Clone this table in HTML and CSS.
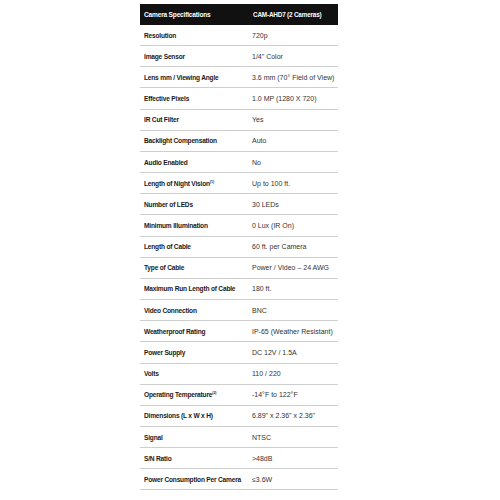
FILE: index.html
```html
<!DOCTYPE html>
<html>
<head>
<meta charset="utf-8">
<link rel="stylesheet" href="styles.css">
</head>
<body>
<div class="specs">
  <div class="row head"><div class="k">Camera Specifications</div><div class="v">CAM-AHD7 (2 Cameras)</div></div>
  <div class="row"><div class="k">Resolution</div><div class="v">720p</div></div>
  <div class="row"><div class="k">Image Sensor</div><div class="v">1/4" Color</div></div>
  <div class="row"><div class="k">Lens mm / Viewing Angle</div><div class="v">3.6 mm (70° Field of View)</div></div>
  <div class="row"><div class="k">Effective Pixels</div><div class="v">1.0 MP (1280 X 720)</div></div>
  <div class="row"><div class="k">IR Cut Filter</div><div class="v">Yes</div></div>
  <div class="row"><div class="k">Backlight Compensation</div><div class="v">Auto</div></div>
  <div class="row"><div class="k">Audio Enabled</div><div class="v">No</div></div>
  <div class="row"><div class="k">Length of Night Vision<sup class="note">(1)</sup></div><div class="v">Up to 100 ft.</div></div>
  <div class="row"><div class="k">Number of LEDs</div><div class="v">30 LEDs</div></div>
  <div class="row"><div class="k">Minimum Illumination</div><div class="v">0 Lux (IR On)</div></div>
  <div class="row"><div class="k">Length of Cable</div><div class="v">60 ft. per Camera</div></div>
  <div class="row"><div class="k">Type of Cable</div><div class="v">Power / Video – 24 AWG</div></div>
  <div class="row"><div class="k">Maximum Run Length of Cable</div><div class="v">180 ft.</div></div>
  <div class="row"><div class="k">Video Connection</div><div class="v">BNC</div></div>
  <div class="row"><div class="k">Weatherproof Rating</div><div class="v">IP-65 (Weather Resistant)</div></div>
  <div class="row"><div class="k">Power Supply</div><div class="v">DC 12V / 1.5A</div></div>
  <div class="row"><div class="k">Volts</div><div class="v">110 / 220</div></div>
  <div class="row"><div class="k">Operating Temperature<sup class="note">(2)</sup></div><div class="v">-14°F to 122°F</div></div>
  <div class="row"><div class="k">Dimensions (L x W x H)</div><div class="v">6.89" x 2.36" x 2.36"</div></div>
  <div class="row"><div class="k">Signal</div><div class="v">NTSC</div></div>
  <div class="row"><div class="k">S/N Ratio</div><div class="v">&gt;48dB</div></div>
  <div class="row"><div class="k">Power Consumption Per Camera</div><div class="v">≤3.6W</div></div>
</div>
</body>
</html>
```
FILE: styles.css
```css
html, body {
  margin: 0;
  padding: 0;
  background: #fff;
}
.specs {
  display: flex;
  flex-direction: column;
  width: 198px;
  margin: 4px 0 0 140px;
  font-family: "Liberation Sans", Arial, sans-serif;
  font-size: 7px;
  color: #333;
}
.row {
  display: grid;
  grid-template-columns: 112px 1fr;
  align-items: center;
  box-sizing: border-box;
  height: 21.17px;
  border-bottom: 1px solid #cfcfcf;
  white-space: nowrap;
}
.row.head {
  height: 21px;
  background: #111;
  color: #fff;
  border-bottom: none;
}
.k {
  padding-left: 4px;
  font-weight: bold;
  font-size: 6.6px;
  letter-spacing: -0.2px;
  color: #1a1a1a;
}
.head .k, .head .v {
  color: #fff;
}
.head .v {
  font-weight: bold;
  font-size: 6.4px;
  letter-spacing: -0.2px;
  padding-left: 1px;
}
.v {
  color: #333;
}
.note {
  font-size: 3.5px;
  letter-spacing: 0;
  vertical-align: 3px;
  line-height: 0;
}
```
